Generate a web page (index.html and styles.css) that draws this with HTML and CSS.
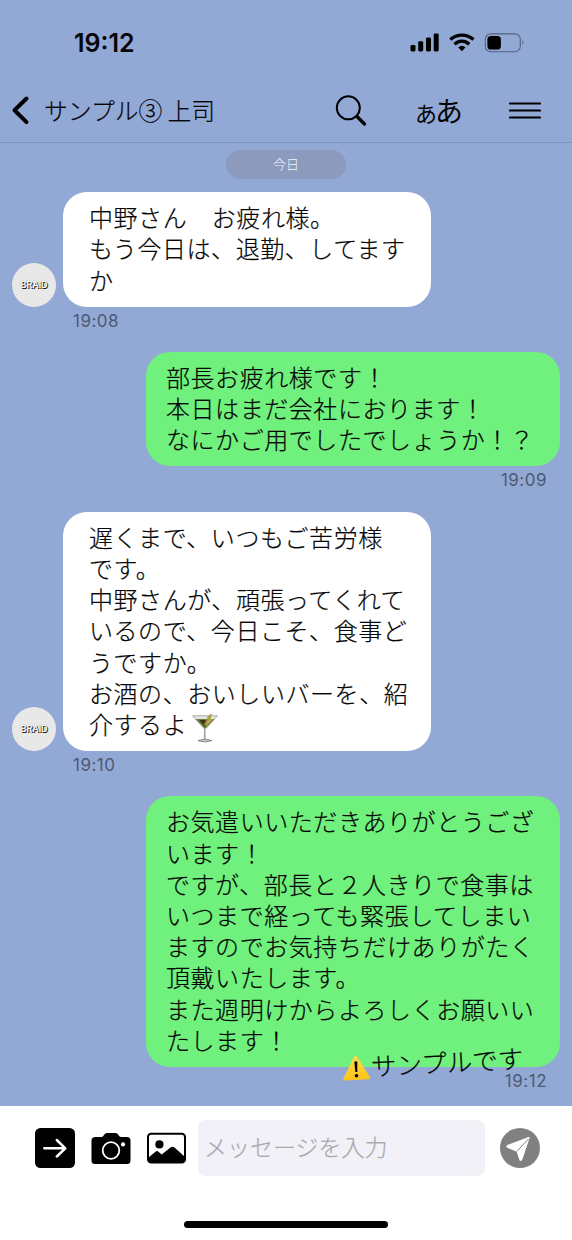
FILE: index.html
```html
<!DOCTYPE html>
<html lang="ja">
<head>
<meta charset="utf-8">
<title>サンプル③ 上司</title>
<link rel="stylesheet" href="styles.css">
</head>
<body>
<div class="screen">
  <header class="header">
    <div class="status">
      <span class="clock">19:12</span>
      <svg class="status-icons" width="116" height="20" viewBox="0 0 116 20">
        <rect x="0.5" y="12" width="5" height="6.5" rx="1.4"/>
        <rect x="8.2" y="8.2" width="5" height="10.3" rx="1.4"/>
        <rect x="16" y="4.5" width="5" height="14" rx="1.4"/>
        <rect x="23.7" y="0.4" width="5" height="18.1" rx="1.4"/>
        <g fill="none" stroke="#000" stroke-width="3.3">
          <path d="M40.3 6.6C47 .7 56.8 .7 63.5 6.6"/>
          <path d="M44.5 11.2C49 7.2 54.8 7.2 59.3 11.2"/>
        </g>
        <path d="M48.2 14.3Q51.9 11.2 55.6 14.3L51.9 18.2Z"/>
        <rect x="75.3" y="0.9" width="35" height="17.8" rx="5.5" fill="none" stroke="#566280" stroke-width="1.1"/>
        <rect x="77.4" y="3" width="13.5" height="13.5" rx="3.6"/>
        <path d="M112.3 7Q114.7 9.5 112.3 12Z" fill="#566280"/>
      </svg>
    </div>
    <nav class="nav">
      <svg class="back" width="20" height="32" viewBox="0 0 20 32"><path d="M16.5 3.5L4.5 15.3L16.5 27.1" fill="none" stroke="#000" stroke-width="4" stroke-linecap="round" stroke-linejoin="round"/></svg>
      <h1 class="title">サンプル③ 上司</h1>
      <svg class="search" width="34" height="34" viewBox="0 0 34 34"><circle cx="13.3" cy="13.8" r="11.5" fill="none" stroke="#000" stroke-width="2"/><path d="M22 22.5L29.5 30" stroke="#000" stroke-width="3.3" stroke-linecap="round"/></svg>
      <span class="size"><span class="size-small">あ</span><span class="size-large">あ</span></span>
      <svg class="menu" width="32" height="20" viewBox="0 0 32 20"><path d="M1 2.5H31M1 9.5H31M1 16.5H31" stroke="#000" stroke-width="2.1" stroke-linecap="round"/></svg>
    </nav>
  </header>

  <main class="chat">
    <div class="date">今日</div>

    <section class="message received">
      <div class="row">
        <div class="avatar">BRAID</div>
        <p class="bubble">中野さん　お疲れ様。<br>もう今日は、退勤、してます<br>か</p>
      </div>
      <time class="time">19:08</time>
    </section>

    <section class="message sent">
      <p class="bubble">部長お疲れ様です！<br>本日はまだ会社におります！<br>なにかご用でしたでしょうか！？</p>
      <time class="time">19:09</time>
    </section>

    <section class="message received">
      <div class="row">
        <div class="avatar">BRAID</div>
        <p class="bubble">遅くまで、いつもご苦労様<br>です。<br>中野さんが、頑張ってくれて<br>いるので、今日こそ、食事ど<br>うですか。<br>お酒の、おいしいバーを、紹<br>介するよ<svg class="drink" width="26" height="30" viewBox="0 0 26 30"><path d="M.6 2.8H25.4L13.8 15.8H12.2Z" fill="#e3e5e1" stroke="#8b918d" stroke-width=".7"/><path d="M3.5 6H22.5L13.7 15.3H12.3Z" fill="#77803a"/><path d="M7 7H14L13 14Z" fill="#353b1c"/><path d="M15 6H21L14.5 13Z" fill="#b6aa58"/><path d="M12.5 12L19.5 1" stroke="#b98b3c" stroke-width="1.4"/><ellipse cx="17.2" cy="4.7" rx="1.9" ry="2.5" transform="rotate(30 17.2 4.7)" fill="#a6a63d"/><path d="M12.2 15H13.8L14 26.5H12Z" fill="#bcc4c1"/><path d="M12.4 15V26.5" stroke="#858e8b" stroke-width=".6"/><path d="M6 27.6Q13 24.8 20 27.6Q13 30.2 6 27.6Z" fill="#d3d7d4" stroke="#69716e" stroke-width=".8"/></svg></p>
      </div>
      <time class="time">19:10</time>
    </section>

    <section class="message sent">
      <p class="bubble">お気遣いいただきありがとうござ<br>います！<br>ですが、部長と２人きりで食事は<br>いつまで経っても緊張してしまい<br>ますのでお気持ちだけありがたく<br>頂戴いたします。<br>また週明けからよろしくお願いい<br>たします！</p>
      <time class="time">19:12</time>
      <div class="sample">
        <svg class="warning" width="28" height="26" viewBox="0 0 28 26"><defs><linearGradient id="amber" x2="0" y2="1"><stop stop-color="#ffdc48"/><stop offset="1" stop-color="#fdc31b"/></linearGradient></defs><path d="M12.5 1.7Q14 -.5 15.5 1.7L27.4 23Q28 25 26 25H2Q0 25 .6 23Z" fill="url(#amber)"/><path d="M12.5 6.5H15.5L15 17H13Z"/><circle cx="14" cy="20.7" r="1.8"/></svg><span>サンプルです</span>
      </div>
    </section>
  </main>

  <footer class="composer">
    <div class="tools">
      <svg width="40" height="40" viewBox="0 0 40 40"><rect width="40" height="40" rx="5.5"/><path d="M9.3 20.3H30M21.8 12L30.3 20.3L21.8 28.5" fill="none" stroke="#fff" stroke-width="2.5" stroke-linecap="round" stroke-linejoin="round"/></svg>
      <svg width="40" height="40" viewBox="0 0 40 40"><path d="M4.5 9H10.5Q12 9 13 7Q14 5 16 5H24.5Q26.5 5 27.5 7Q28.5 9 30 9H36Q39.5 9 39.5 12.5V32.5Q39.5 36 36 36H4Q.5 36 .5 32.5V12.5Q.5 9 4.5 9Z"/><circle cx="20" cy="22.5" r="8.3" fill="none" stroke="#fff" stroke-width="1.8"/><circle cx="32" cy="16.4" r="2.1" fill="#fff"/></svg>
      <svg width="40" height="40" viewBox="0 0 40 40"><rect x="1" y="5.8" width="37" height="28.8" rx="3.2" fill="#fff" stroke="#000" stroke-width="2"/><circle cx="12.4" cy="16.4" r="4.1"/><path d="M1.5 29.5L8.5 23.7Q10 22.5 11.5 23.7L14.7 26.5L23.5 19.5Q25.5 18 27.5 19.5L37.5 28.5V32Q37.5 34.5 35 34.5H4Q1.5 34.5 1.5 32Z"/></svg>
    </div>
    <div class="input">メッセージを入力</div>
    <svg class="send" width="40" height="40" viewBox="0 0 40 40"><circle cx="20" cy="20" r="20" fill="#808080"/><path d="M28.5 9.1Q30 8.8 29.5 10.3L22.3 31.8Q20.7 34 19.3 31.7L16.7 23.7L7.2 19.7Q5.5 18.5 7.3 17Z" fill="#fff"/><path d="M16.9 23.4L28.6 10.8" stroke="#808080" stroke-width="1"/></svg>
    <div class="home"></div>
  </footer>
</div>
</body>
</html>
```
FILE: styles.css
```css
* { box-sizing: border-box; }

body {
  margin: 0;
  color: #050505;
  font-family: "Noto Sans CJK JP", sans-serif;
  font-weight: 300;
}

svg { display: block; flex-shrink: 0; }

.screen {
  width: 572px;
  height: 1240px;
  display: flex;
  flex-direction: column;
  overflow: hidden;
  background: #93a9d5;
}

.header {
  height: 143px;
  border-bottom: 1px solid #7b92be;
}

.status {
  height: 80px;
  padding: 6px 46px 0 74px;
  display: flex;
  align-items: center;
  justify-content: space-between;
}

.clock {
  font: 600 25px/30px Inter, sans-serif;
}

.nav {
  height: 62px;
  padding-left: 10px;
  display: flex;
  align-items: center;
}

.title {
  width: 182px;
  margin: -2px 0 0 14px;
  font-size: 23.8px;
  font-weight: 300;
  line-height: 32px;
  white-space: nowrap;
  -webkit-text-stroke: 0.2px;
}

.search { margin-left: 109px; }

.size {
  width: 50px;
  margin: 0 0 0 46px;
  display: flex;
  align-items: baseline;
  line-height: 34px;
  font-weight: 400;
}

.size-small { font-size: 22px; }
.size-large { font-size: 28px; margin-left: -2px; }

.menu { margin-left: 44px; }

.chat {
  height: 963px;
  padding-top: 7px;
  display: flex;
  flex-direction: column;
}

.date {
  flex-shrink: 0;
  width: 120px;
  height: 29px;
  margin: 0 0 13px 226px;
  border-radius: 15px;
  background: #8b9abd;
  color: #f3f6fc;
  font-size: 13px;
  line-height: 27px;
  text-align: center;
}

.message {
  position: relative;
  flex-shrink: 0;
  margin-bottom: 20.2px;
  display: flex;
  flex-direction: column;
}

.message:last-child { margin-bottom: 0; }

.received { align-items: flex-start; padding-left: 11px; }
.sent { align-items: flex-end; padding-right: 12px; }

.row {
  display: flex;
  align-items: flex-end;
  gap: 7px;
}

.avatar {
  width: 44px;
  height: 44px;
  margin-left: 1px;
  border-radius: 50%;
  background: #e8e8e8;
  color: #fff;
  font: 600 9px/44px Inter, sans-serif;
  letter-spacing: -0.1px;
  text-align: center;
  text-shadow: 1px 1px 0 #222, 0 0 1px #777;
}

.bubble {
  margin: 0;
  padding: 9.2px 0 11.8px 26px;
  border-radius: 24px;
  font-size: 24px;
  line-height: 31.2px;
  letter-spacing: 0.56px;
  white-space: nowrap;
  -webkit-text-stroke: 0.2px;
}

.received .bubble { width: 368px; background: #fff; }

.sent .bubble {
  width: 414px;
  padding-left: 20px;
  background: #70f07c;
}

.time {
  height: 25px;
  color: #4d5a73;
  font: 400 17px/28px Inter, sans-serif;
  letter-spacing: 0.5px;
}

.received .time { padding-left: 62px; }
.sent .time { padding-right: 13px; }

.drink {
  display: inline-block;
  margin: -4px 0 -4px 5px;
  vertical-align: -5px;
}

.sample {
  position: absolute;
  left: 342px;
  bottom: 15px;
  display: flex;
  align-items: center;
  gap: 1px;
  font-size: 25.5px;
  line-height: 30px;
  transform: rotate(-3deg);
  white-space: nowrap;
  -webkit-text-stroke: 0.2px;
}

.sample span { margin-top: -3px; }

.composer {
  height: 134px;
  padding: 14px 32px 0 35px;
  display: flex;
  flex-wrap: wrap;
  align-content: flex-start;
  align-items: center;
  background: #fff;
}

.tools {
  width: 163px;
  display: flex;
  gap: 16px;
}

.input {
  width: 287px;
  height: 56px;
  padding-left: 6px;
  border-radius: 7px;
  background: #f2f1f7;
  color: #a9a9ae;
  font-size: 23px;
  line-height: 52px;
  -webkit-text-stroke: 0.2px;
}

.send { margin-left: 15px; }

.home {
  width: 204px;
  height: 7px;
  margin: 45px 0 0 149px;
  border-radius: 4px;
  background: #000;
}
```
